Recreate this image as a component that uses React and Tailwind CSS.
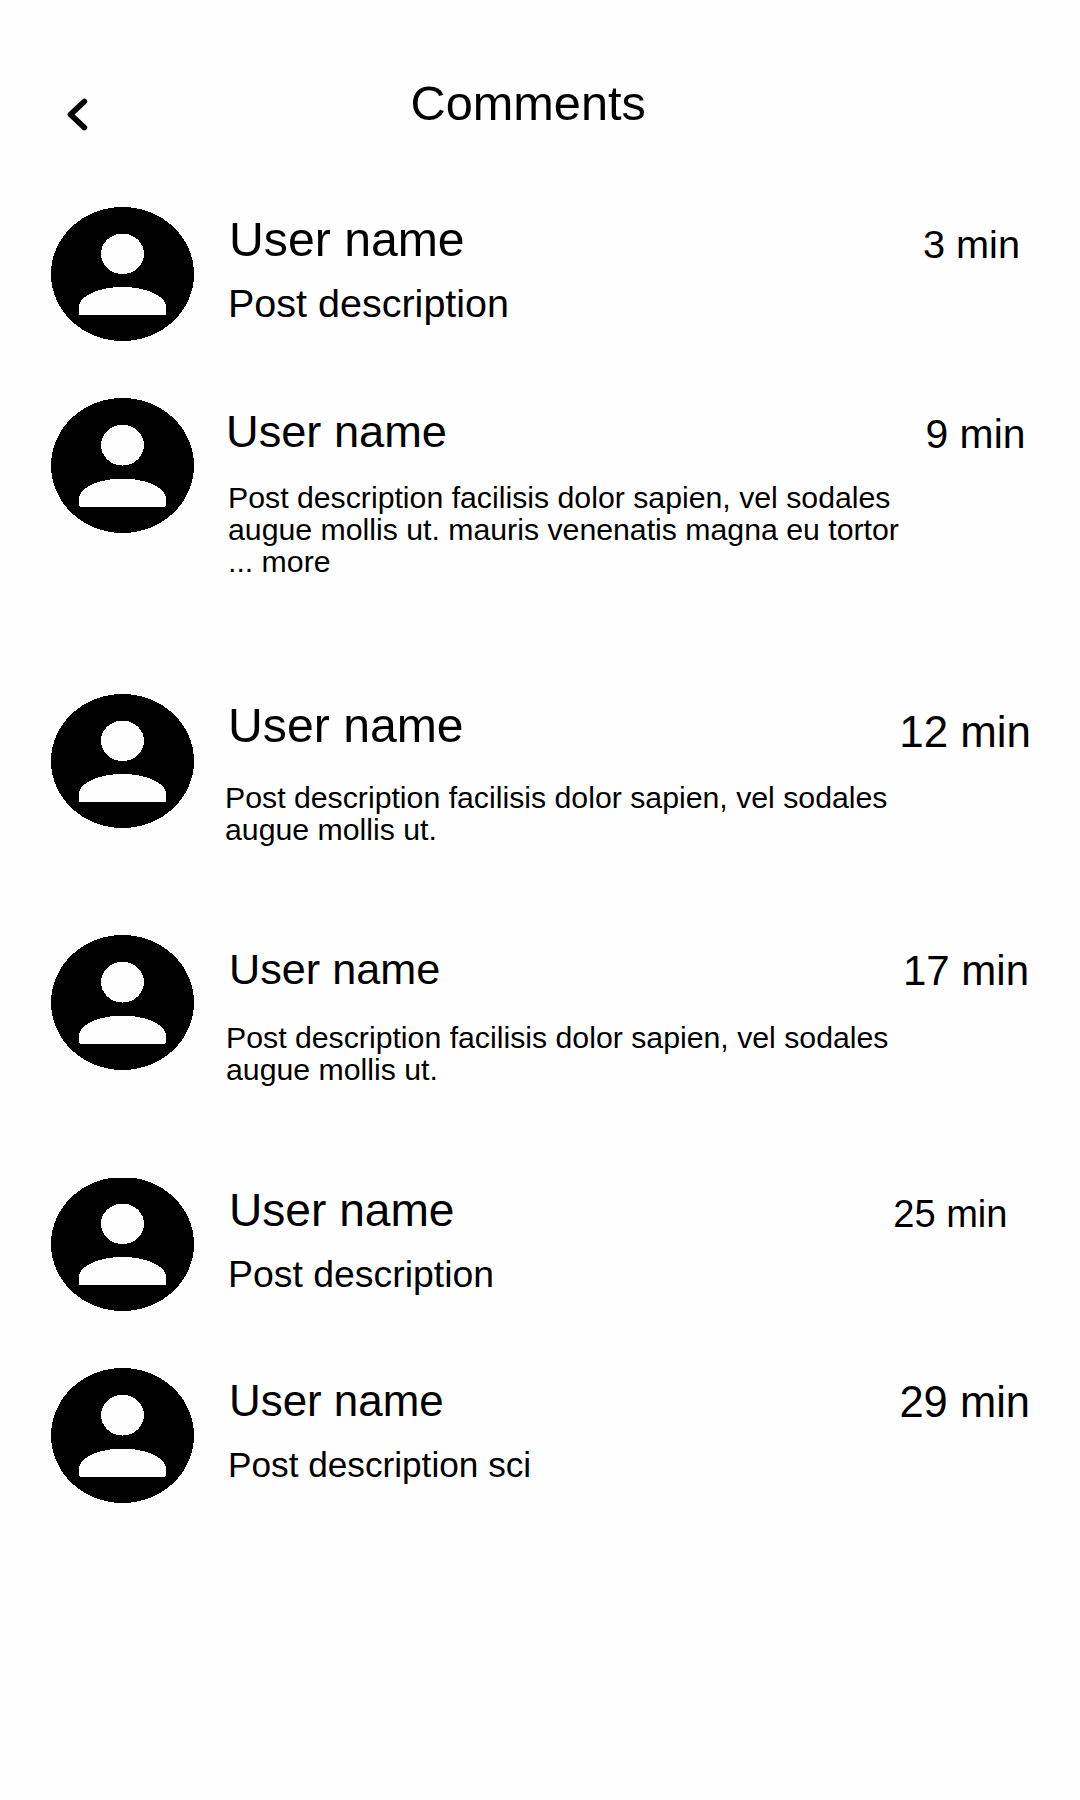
const comments = [
  {
    time: "3 min",
    lines: ["Post description"],
    row: "h-[191px]",
    header: "h-[74px]",
    nameClass: "mt-[5px] ml-[5px] text-[48.2px] leading-[54px]",
    timeClass: "mt-[15px] mr-[60px] text-[39.7px] leading-[44px]",
    bodyClass: "ml-1 text-[39.5px] leading-[44px]",
  },
  {
    time: "9 min",
    lines: [
      "Post description facilisis dolor sapien, vel sodales",
      "augue mollis ut. mauris venenatis magna eu tortor",
      "... more",
    ],
    row: "h-[296px]",
    header: "h-[84px]",
    avatar: "h-[135px]",
    nameClass: "mt-2 ml-[2px] text-[45.2px] leading-[51px]",
    timeClass: "mt-[13px] mr-[54.5px] text-[40.9px] leading-[46px]",
    bodyClass: "ml-1 text-[30.25px] leading-[32px]",
  },
  {
    time: "12 min",
    lines: ["Post description facilisis dolor sapien, vel sodales", "augue mollis ut."],
    row: "h-[241px]",
    header: "h-[88px]",
    nameClass: "mt-1 ml-1 text-[48.2px] leading-[54px]",
    timeClass: "mt-[13px] mr-[49px] text-[43.9px] leading-[49px]",
    bodyClass: "ml-[1px] text-[30.25px] leading-[32px]",
  },
  {
    time: "17 min",
    lines: ["Post description facilisis dolor sapien, vel sodales", "augue mollis ut."],
    row: "h-[242px]",
    header: "h-[87px]",
    avatar: "h-[135px]",
    nameClass: "mt-[10px] ml-[5px] text-[43.2px] leading-[48px]",
    timeClass: "mt-3 mr-[51px] text-[42px] leading-[47px]",
    bodyClass: "ml-[2px] text-[30.25px] leading-[32px]",
  },
  {
    time: "25 min",
    lines: ["Post description"],
    row: "h-[191px]",
    header: "h-[76px]",
    avatar: "h-[134px] [clip-path:inset(1px_0_0_0)]",
    nameClass: "mt-[7px] ml-[5px] text-[46.1px] leading-[52px]",
    timeClass: "mt-4 mr-[72.5px] text-[38.1px] leading-[42px]",
    bodyClass: "ml-1 text-[37.4px] leading-[42px]",
  },
  {
    time: "29 min",
    lines: ["Post description sci"],
    row: "h-[135px]",
    header: "h-[77px]",
    avatar: "h-[135px]",
    nameClass: "mt-2 ml-[5px] text-[43.9px] leading-[49px]",
    timeClass: "mt-[10px] mr-[50px] text-[43.5px] leading-[48px]",
    bodyClass: "ml-1 text-[35.2px] leading-[39px]",
  },
];

function Avatar({ className = "h-[134px]" }) {
  return (
    <svg
      className={`w-[143px] shrink-0 ${className}`}
      viewBox="0 0 143 134"
      preserveAspectRatio="none"
      shapeRendering="crispEdges"
      aria-hidden="true"
    >
      <ellipse cx="71.5" cy="67" rx="71.5" ry="67" fill="#000" />
      <ellipse cx="71.5" cy="46.8" rx="21.5" ry="20.2" fill="#fefefe" />
      <path
        d="M29.5 108Q28 108 28 106.500V98C31 87 51 80 71.500 80S112 87 115 98V106.500Q115 108 113.500 108Z"
        fill="#fefefe"
      />
    </svg>
  );
}

function Comment({ comment }) {
  return (
    <article className={`flex items-start gap-[30px] ${comment.row}`}>
      <Avatar className={comment.avatar} />
      <div className="min-w-0 flex-1 whitespace-nowrap">
        <header className={`flex items-start justify-between ${comment.header}`}>
          <h2 className={comment.nameClass}>User name</h2>
          <time className={comment.timeClass}>{comment.time}</time>
        </header>
        <div className={comment.bodyClass}>
          {comment.lines.map((line) => (
            <p key={line}>{line}</p>
          ))}
        </div>
      </div>
    </article>
  );
}

export default function App() {
  return (
    <main className="h-[1800px] w-[1080px] overflow-hidden bg-[#fefefe] font-['Liberation_Sans',Arial,sans-serif] text-black">
      <header className="flex h-[207px] items-start pl-[67px]">
        <button className="mt-[98px]" aria-label="Back">
          <svg className="block h-[33px] w-[21px]" viewBox="0 0 21 33" fill="none">
            <path
              d="M17.3 3.500L3.500 16.500L17.300 29.500"
              stroke="#000"
              strokeWidth="5.800"
              strokeLinecap="round"
              strokeLinejoin="round"
            />
          </svg>
        </button>
        <h1 className="mt-[76px] ml-[322.5px] text-[48.7px] leading-[54px]">Comments</h1>
      </header>
      <section className="pl-[51px]">
        {comments.map((comment) => (
          <Comment key={comment.time} comment={comment} />
        ))}
      </section>
    </main>
  );
}
